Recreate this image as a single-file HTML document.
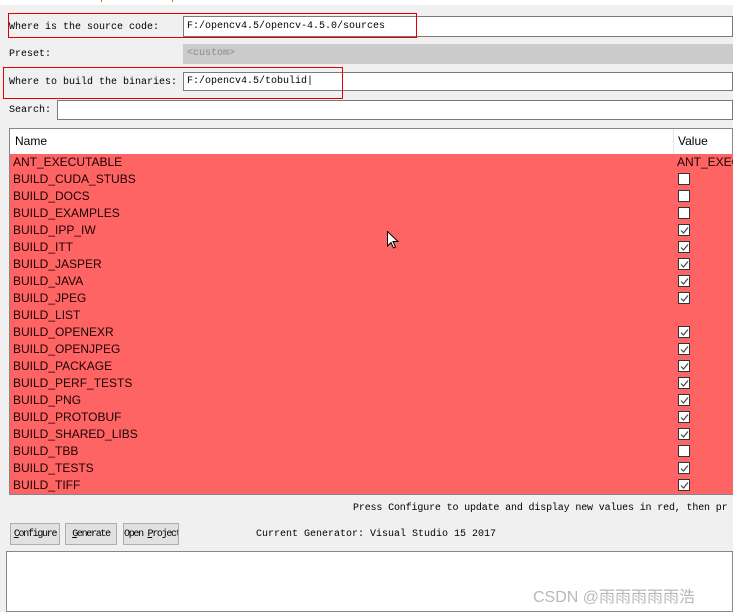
<!DOCTYPE html>
<html><head><style>
*{margin:0;padding:0;box-sizing:border-box}
body{width:733px;height:612px;background:#f0f0f0;position:relative;overflow:hidden;font-family:"Liberation Mono","Noto Sans CJK SC",monospace;}
.a{position:absolute}
.lbl{font-family:"Liberation Mono",monospace;font-size:10px;color:#000;white-space:nowrap}
.inp{background:#fff;border:1px solid #7a7a7a;font-family:"Liberation Mono",monospace;font-size:10px;padding-left:3px;line-height:20px;white-space:nowrap}
.red{border:1px solid #e00000}
.row{position:absolute;left:10px;width:723px;height:17px;font-family:"Liberation Sans",sans-serif;font-size:12px;color:#1a0000;line-height:17px;padding-left:3px}
.cb{position:absolute;left:668px;top:2px;width:12px;height:12px;background:#fff;border:1px solid #333}
.cb svg{position:absolute;left:1px;top:1px}
.btn{position:absolute;top:523px;height:22px;background:#e1e1e1;border:1px solid #adadad;font-family:"Liberation Mono",monospace;font-size:10px;letter-spacing:-1.3px;line-height:21px;text-align:center;white-space:nowrap;overflow:hidden}
</style></head><body>
<div class="a" style="left:0;top:0;width:733px;height:5px;background:#fff"></div>
<div class="a" style="left:101px;top:0;width:1px;height:2px;background:#e07000"></div>
<div class="a" style="left:172px;top:0;width:1px;height:2px;background:#e07000"></div>

<div class="a lbl" style="left:9px;top:22px">Where is the source code:</div>
<div class="a inp" style="left:183px;top:16px;width:550px;height:21px">F:/opencv4.5/opencv-4.5.0/sources</div>
<div class="a red" style="left:8px;top:13px;width:409px;height:25px"></div>

<div class="a lbl" style="left:9px;top:49px">Preset:</div>
<div class="a" style="left:183px;top:44px;width:550px;height:20px;background:#cbcbcb;font-family:'Liberation Mono',monospace;font-size:10px;color:#888;padding-left:4px;line-height:20px">&lt;custom&gt;</div>

<div class="a lbl" style="left:9px;top:77px">Where to build the binaries:</div>
<div class="a inp" style="left:183px;top:72px;width:550px;height:19px;line-height:18px">F:/opencv4.5/tobulid|</div>
<div class="a red" style="left:3px;top:67px;width:340px;height:32px"></div>

<div class="a lbl" style="left:9px;top:105px">Search:</div>
<div class="a" style="left:57px;top:100px;width:676px;height:20px;background:#fff;border:1px solid #7a7a7a"></div>

<div class="a" style="left:9px;top:128px;width:724px;height:367px;background:#fff;border:1px solid #828790"></div>
<div class="a" style="left:15px;top:134px;font-family:'Liberation Sans',sans-serif;font-size:12px">Name</div>
<div class="a" style="left:673px;top:129px;width:1px;height:25px;background:#e5e5e5"></div>
<div class="a" style="left:678px;top:134px;font-family:'Liberation Sans',sans-serif;font-size:12px">Value</div>

<div class="a" style="left:10px;top:154px;width:723px;height:340px;background:#ff6464"></div>
<div id="rows"></div>
<script>
var r=[["ANT_EXECUTABLE","t"],["BUILD_CUDA_STUBS",0],["BUILD_DOCS",0],["BUILD_EXAMPLES",0],["BUILD_IPP_IW",1],["BUILD_ITT",1],["BUILD_JASPER",1],["BUILD_JAVA",1],["BUILD_JPEG",1],["BUILD_LIST",null],["BUILD_OPENEXR",1],["BUILD_OPENJPEG",1],["BUILD_PACKAGE",1],["BUILD_PERF_TESTS",1],["BUILD_PNG",1],["BUILD_PROTOBUF",1],["BUILD_SHARED_LIBS",1],["BUILD_TBB",0],["BUILD_TESTS",1],["BUILD_TIFF",1]];
var h="";r.forEach(function(x,i){var t=154+i*17;h+='<div class="row" style="top:'+t+'px">'+x[0];
if(x[1]==="t")h+='<span style="position:absolute;left:667px;top:0">ANT_EXEC</span>';
else if(x[1]!==null){h+='<div class="cb">'+(x[1]?'<svg width="9" height="9"><path d="M1 4.5 L3.5 7 L8 1.5" stroke="#444" stroke-width="1.2" fill="none"/></svg>':'')+'</div>';}
h+='</div>';});document.getElementById("rows").innerHTML=h;
</script>
<svg class="a" style="left:387px;top:231px" width="12" height="19"><path d="M0.5 0.5 L0.5 15 L4 11.5 L6.5 17 L8.5 16 L6 10.5 L11 10.5 Z" fill="#fff" stroke="#000"/></svg>

<div class="a lbl" style="left:353px;top:503px;letter-spacing:-0.15px">Press Configure to update and display new values in red, then pr</div>
<div class="btn" style="left:10px;width:50px"><u>C</u>onfigure</div>
<div class="btn" style="left:65px;width:52px"><u>G</u>enerate</div>
<div class="btn" style="left:123px;width:56px">Open <u>P</u>roject</div>
<div class="a lbl" style="left:256px;top:529px">Current Generator: Visual Studio 15 2017</div>

<div class="a" style="left:6px;top:551px;width:727px;height:61px;background:#fff;border:1px solid #828790"></div>
<div class="a" style="left:533px;top:583px;font-family:'Liberation Sans','Noto Sans CJK SC',sans-serif;font-size:16px;color:#b8b8b8">CSDN @雨雨雨雨雨浩</div>
</body></html>
